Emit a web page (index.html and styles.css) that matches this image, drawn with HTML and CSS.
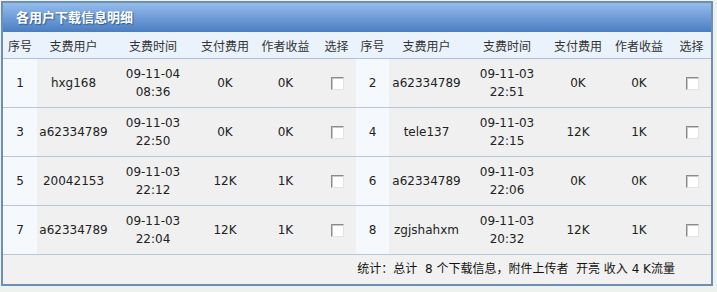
FILE: index.html
```html
<!DOCTYPE html>
<html lang="zh">
<head>
<meta charset="utf-8">
<title>各用户下载信息明细</title>
<link rel="stylesheet" href="styles.css">
</head>
<body>
<div class="box">
  <div class="title">各用户下载信息明细</div>
  <table class="grid">
    <colgroup>
      <col class="c1"><col class="c2"><col class="c3"><col class="c4"><col class="c5"><col class="c6">
      <col class="d1"><col class="d2"><col class="d3"><col class="d4"><col class="d5"><col class="d6">
    </colgroup>
    <thead>
      <tr>
        <th>序号</th><th>支费用户</th><th>支费时间</th><th>支付费用</th><th>作者收益</th><th>选择</th>
        <th>序号</th><th>支费用户</th><th>支费时间</th><th>支付费用</th><th>作者收益</th><th>选择</th>
      </tr>
    </thead>
    <tbody>
      <tr>
        <td class="no">1</td><td>hxg168</td><td>09-11-04<br>08:36</td><td>0K</td><td>0K</td><td><span class="cb"></span></td>
        <td class="no">2</td><td>a62334789</td><td>09-11-03<br>22:51</td><td>0K</td><td>0K</td><td><span class="cb"></span></td>
      </tr>
      <tr>
        <td class="no">3</td><td>a62334789</td><td>09-11-03<br>22:50</td><td>0K</td><td>0K</td><td><span class="cb"></span></td>
        <td class="no">4</td><td>tele137</td><td>09-11-03<br>22:15</td><td>12K</td><td>1K</td><td><span class="cb"></span></td>
      </tr>
      <tr>
        <td class="no">5</td><td>20042153</td><td>09-11-03<br>22:12</td><td>12K</td><td>1K</td><td><span class="cb"></span></td>
        <td class="no">6</td><td>a62334789</td><td>09-11-03<br>22:06</td><td>0K</td><td>0K</td><td><span class="cb"></span></td>
      </tr>
      <tr>
        <td class="no">7</td><td>a62334789</td><td>09-11-03<br>22:04</td><td>12K</td><td>1K</td><td><span class="cb"></span></td>
        <td class="no">8</td><td>zgjshahxm</td><td>09-11-03<br>20:32</td><td>12K</td><td>1K</td><td><span class="cb"></span></td>
      </tr>
    </tbody>
  </table>
  <div class="foot">统计：总计&nbsp; 8 个下载信息，附件上传者&nbsp; 开亮 收入 4 K流量</div>
</div>
</body>
</html>
```
FILE: styles.css
```css
html, body {
  margin: 0;
  padding: 0;
  background: #eef2ee;
}
body {
  padding: 1px 0 0 1px;
  font-family: "DejaVu Sans", "Noto Sans CJK SC", sans-serif;
  font-size: 12px;
  color: #222;
}
.box {
  width: 708px;
  border: 2px solid #6e8fb2;
  background: #f1f1f1;
}
.title {
  height: 29px;
  line-height: 29px;
  padding-left: 13px;
  font-size: 13px;
  font-weight: bold;
  color: #fff;
  text-shadow: 1px 1px 1px #2d5a92;
  background: linear-gradient(#95bdeb, #6c9ad6 55%, #4a7ec1);
}
.grid {
  width: 708px;
  border-collapse: collapse;
  table-layout: fixed;
}
.c1 { width: 34px; }
.c2 { width: 73px; }
.c3 { width: 86px; }
.c4 { width: 58px; }
.c5 { width: 63px; }
.c6 { width: 39px; }
.d1 { width: 33px; }
.d2 { width: 75px; }
.d3 { width: 86px; }
.d4 { width: 56px; }
.d5 { width: 66px; }
.d6 { width: 39px; }
.grid th {
  height: 26px;
  padding: 0;
  font-weight: normal;
  color: #333;
  background: #eaf2fb;
  border-bottom: 1px solid #a9c1dd;
  text-align: center;
}
.grid td {
  height: 48px;
  padding: 0;
  line-height: 18px;
  text-align: center;
  border-bottom: 1px solid #b7c7d8;
  background: #f0f0f0;
}
.grid td.no {
  background: #f5f9fd;
}
.cb {
  display: inline-block;
  width: 11px;
  height: 11px;
  vertical-align: middle;
  background: #fff;
  border-top: 1px solid #8b8b8b;
  border-left: 1px solid #8b8b8b;
  border-right: 1px solid #e2e2e2;
  border-bottom: 1px solid #e2e2e2;
  box-shadow: inset 1px 1px 0 #c8c8c8;
  margin-left: 2px;
}
.foot {
  height: 29px;
  line-height: 29px;
  text-align: right;
  padding-right: 36px;
  color: #111;
  background: #f1f1f1;
}
```
